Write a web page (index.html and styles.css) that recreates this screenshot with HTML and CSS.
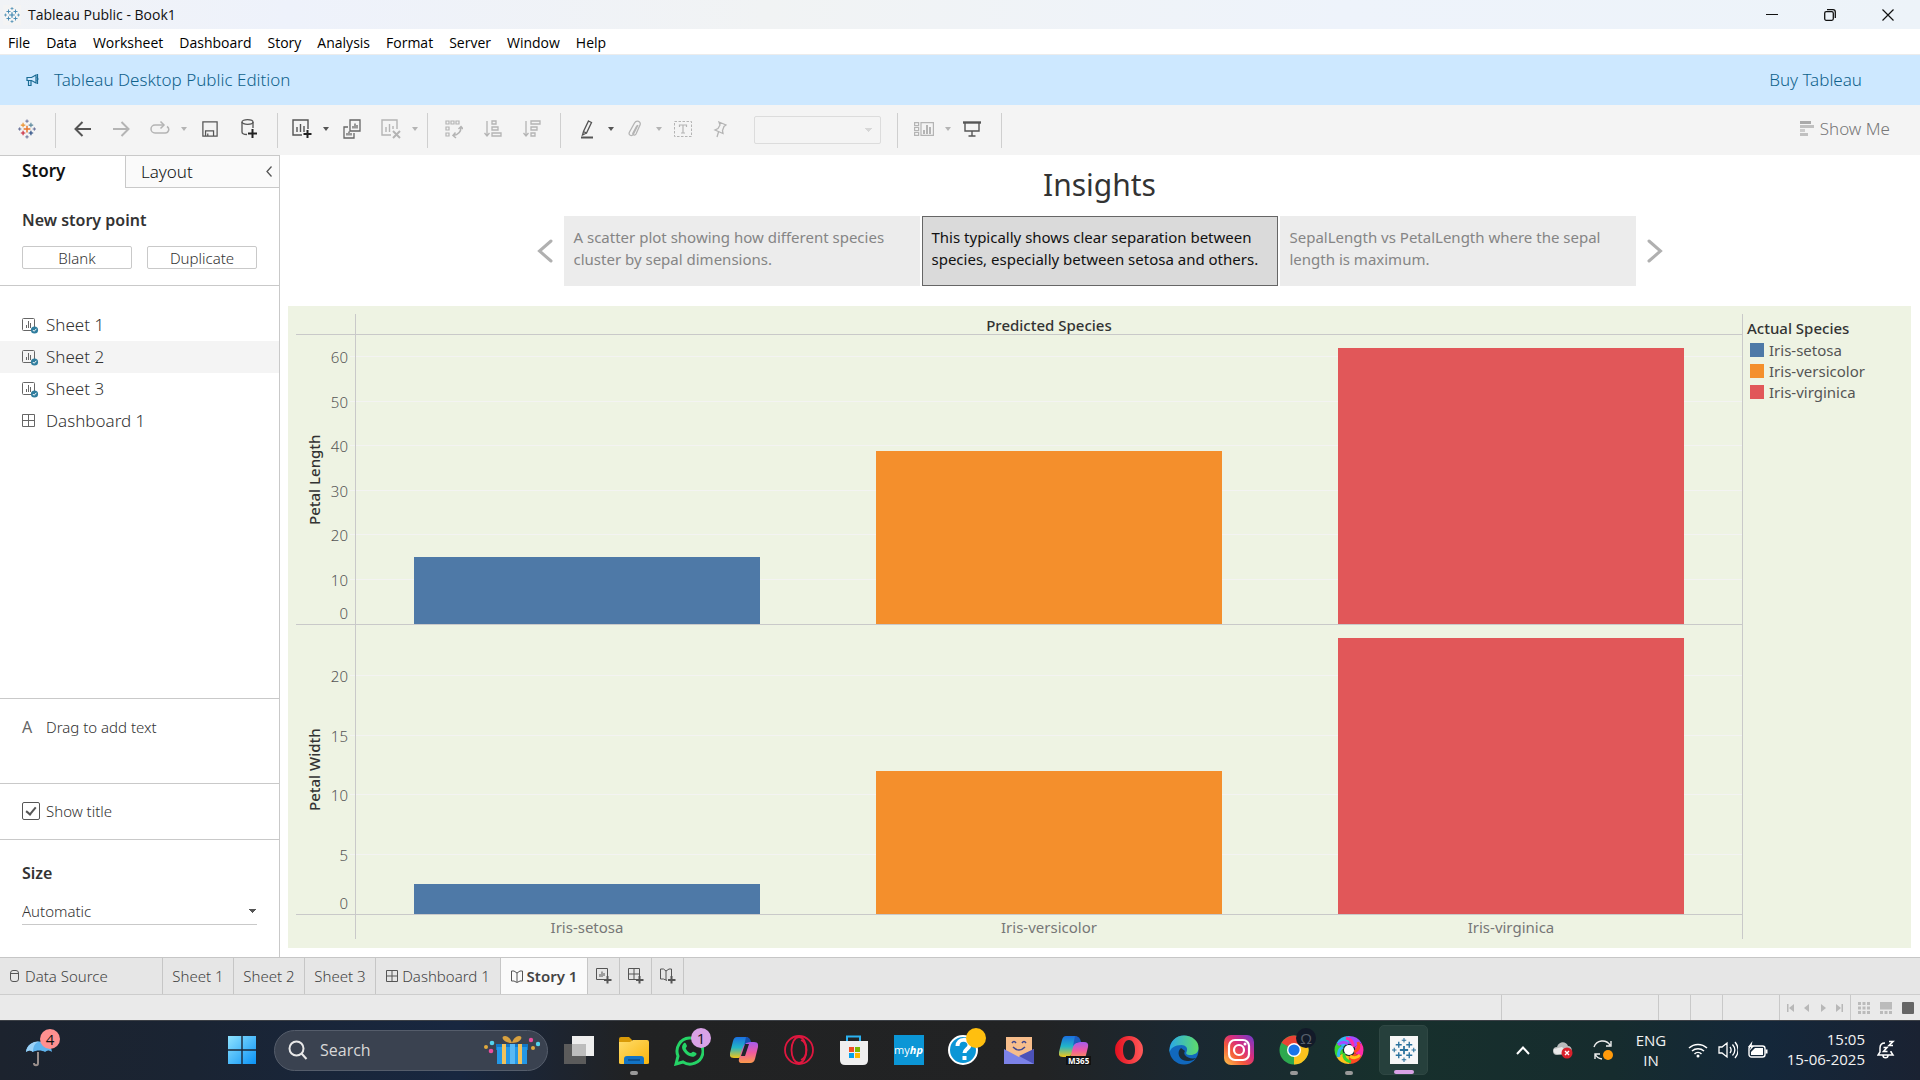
FILE: index.html
```html
<!DOCTYPE html>
<html lang="en">
<head>
<meta charset="utf-8">
<title>Tableau Public - Book1</title>
<link rel="stylesheet" href="styles.css">
</head>
<body>
<svg class="defs" aria-hidden="true">
  <defs>
    <symbol id="marks" viewBox="0 0 32 32">
      <g fill="none" stroke="currentColor">
        <path stroke-width="2.4" d="M16 10.500v11M10.500 16h11"/>
        <path stroke-width="1.800" d="M9 5v8M5 9h8M23 5v8M19 9h8M9 19v8M5 23h8M23 19v8M19 23h8"/>
        <path stroke-width="1.400" d="M16 0v6M13 3h6M16 26v6M13 29h6M3 13v6M0 16h6M29 13v6M26 16h6"/>
      </g>
    </symbol>
    <symbol id="sheet" viewBox="0 0 18 18">
      <rect x="0.500" y="2.500" width="12" height="12" rx="1" fill="none" stroke="#666"/>
      <path d="M4.500 9v3M6.500 5v7M8.500 7v5" stroke="#666"/>
      <circle cx="12.500" cy="14" r="3.600" fill="#2f7d9e"/>
      <path d="M10.800 14l1.300 1.300 2.300-2.500" fill="none" stroke="#fff"/>
    </symbol>
    <symbol id="dash" viewBox="0 0 18 18">
      <path d="M.500 2.500h12v12H.500zM6.500 2.500v12M.500 8.500h12" fill="none" stroke="#666"/>
    </symbol>
    <linearGradient id="gWin" x1="0" y1="0" x2="1" y2="1"><stop offset="0" stop-color="#8fe3ff"/><stop offset="1" stop-color="#0a92f5"/></linearGradient>
    <linearGradient id="gFold" x1="0" y1="0" x2="1" y2="1"><stop offset="0" stop-color="#ffdc6b"/><stop offset="1" stop-color="#f9b50b"/></linearGradient>
    <linearGradient id="gCopA" x1="0" y1="0" x2="0" y2="1"><stop offset="0" stop-color="#1b6fe0"/><stop offset=".500" stop-color="#22b5c8"/><stop offset="1" stop-color="#f2c718"/></linearGradient>
    <linearGradient id="gCopB" x1="0" y1="0" x2="0" y2="1"><stop offset="0" stop-color="#a45cf0"/><stop offset=".500" stop-color="#ef5aa0"/><stop offset="1" stop-color="#fb9a4b"/></linearGradient>
    <linearGradient id="gEdge" x1="0" y1="0" x2="1" y2="0"><stop offset="0" stop-color="#2aa9e8"/><stop offset="1" stop-color="#5fdc6a"/></linearGradient>
    <linearGradient id="gInsta" x1="0" y1="1" x2="1" y2="0"><stop offset="0" stop-color="#fdc94b"/><stop offset=".350" stop-color="#f4593a"/><stop offset=".600" stop-color="#d82d7e"/><stop offset="1" stop-color="#6b3bd1"/></linearGradient>
    <linearGradient id="gOpera" x1="0" y1="0" x2="1" y2="0"><stop offset="0" stop-color="#e3101f"/><stop offset="1" stop-color="#ff5a5a"/></linearGradient>
  </defs>
</svg>

<header class="titlebar">
  <svg class="app-icon" viewBox="0 0 18 20"><rect width="18" height="20" fill="#f4f4f4"/><use href="#marks" x="1" y="2" width="16" height="16" color="#3f86b0"/></svg>
  <span class="title">Tableau Public - Book1</span>
  <div class="win-controls">
    <button aria-label="Minimize"><svg width="12" height="12" viewBox="0 0 12 12"><path d="M0 5.500h12" stroke="#111"/></svg></button>
    <button aria-label="Restore"><svg width="12" height="12" viewBox="0 0 12 12" fill="none" stroke="#111" stroke-width="1.300"><rect x=".700" y="2.700" width="8.600" height="8.600" rx="1.500"/><path d="M3 .700h6a2.300 2.300 0 0 1 2.300 2.300v6"/></svg></button>
    <button aria-label="Close"><svg width="12" height="12" viewBox="0 0 12 12"><path d="M.500.500l11 11M11.500.500l-11 11" stroke="#111" stroke-width="1.200"/></svg></button>
  </div>
</header>

<nav class="menubar">
  <button>File</button><button>Data</button><button>Worksheet</button><button>Dashboard</button><button>Story</button><button>Analysis</button><button>Format</button><button>Server</button><button>Window</button><button>Help</button>
</nav>

<div class="banner">
  <svg width="14" height="14" viewBox="0 0 14 14" fill="none" stroke="#1a6b94" stroke-width="1.200"><path d="M1 4.500h4.500L10 2v8L5.500 7.500H1zM2.500 7.500v5h2.500v-5"/><path d="M10.500 4.500c2 0 2 3 0 3M11.500 1v10"/></svg>
  <a href="#">Tableau Desktop Public Edition</a>
  <a href="#" class="buy">Buy Tableau</a>
</div>

<div class="toolbar">
  <div class="group g-logo">
    <button class="tool" aria-label="Start page"><svg width="18" height="20" viewBox="0 0 32 34" fill="none">
      <path d="M16 11v12M10 17h12" stroke="#e8762c" stroke-width="2.600"/>
      <path d="M9 6v8M5 10h8" stroke="#eb912c" stroke-width="2"/><path d="M23 6v8M19 10h8" stroke="#59879b" stroke-width="2"/>
      <path d="M9 20v8M5 24h8" stroke="#c72035" stroke-width="2"/><path d="M23 20v8M19 24h8" stroke="#1f447e" stroke-width="2"/>
      <path d="M16 0v6M13 3h6M16 28v6M13 31h6M3 14v6M0 17h6M29 14v6M26 17h6" stroke="#5b6591" stroke-width="1.600"/></svg></button>
  </div>
  <div class="group g-nav">
    <button class="tool" aria-label="Back"><svg width="17" height="16" viewBox="0 0 17 16" fill="none" stroke="#555" stroke-width="2"><path d="M8.500 1L1.500 8l7 7M1.500 8H17"/></svg></button>
    <button class="tool" aria-label="Forward"><svg width="17" height="16" viewBox="0 0 17 16" fill="none" stroke="#b4b4b4" stroke-width="2"><path d="M8.500 1l7 7-7 7M15.500 8H0"/></svg></button>
    <div class="combo"><button class="tool" aria-label="Replay"><svg width="20" height="16" viewBox="0 0 20 16" fill="none" stroke="#b4b4b4" stroke-width="1.500"><path d="M13 4H5a4 4 0 0 0 0 8h10a3.500 3.500 0 0 0 2-6.500"/><path d="M10.500.500L14 4l-3.500 3.500"/></svg></button><button class="caret off" aria-label="Replay options"></button></div>
    <button class="tool" aria-label="Save"><svg width="16" height="16" viewBox="0 0 18 18" fill="none" stroke="#555" stroke-width="1.400"><path d="M1 1h16v16H1zM4 17v-6h9v6M6.500 17v-3"/></svg></button>
    <button class="tool" aria-label="New data source"><svg width="18" height="20" viewBox="0 0 18 20" fill="none" stroke="#555" stroke-width="1.300"><ellipse cx="7.500" cy="3" rx="5.500" ry="2.300"/><path d="M2 3v10c0 1.500 2 2.500 5 2.500M13 3v6"/><path d="M12.500 10v9M8 14.500h9" stroke="#222" stroke-width="2"/></svg></button>
  </div>
  <div class="group g-sheet">
    <div class="combo"><button class="tool" aria-label="New worksheet"><svg width="20" height="20" viewBox="0 0 20 20" fill="none" stroke="#555" stroke-width="1.400"><path d="M10 16H1V1h15v9M5 8v5M8.500 5v8M12 7v6"/><path d="M15.500 11v8M11.500 15h8" stroke="#222" stroke-width="2"/></svg></button><button class="caret" aria-label="New worksheet options"></button></div>
    <button class="tool" aria-label="Duplicate"><svg width="18" height="20" viewBox="0 0 18 20" fill="none" stroke="#666" stroke-width="1.300"><path d="M7 1h10v11H7zM10 7v2.500M12 4.500v5M14 6v3.500M5 8H1v11h10v-5M4 14v2.500M6 12.500v4M8 14v2.500"/></svg></button>
    <div class="combo"><button class="tool" aria-label="Clear sheet"><svg width="20" height="20" viewBox="0 0 20 20" fill="none" stroke="#b4b4b4" stroke-width="1.400"><path d="M10 16H1V1h15v9M5 8v5M8.500 5v8M12 7v3"/><path d="M12 12l7 7M19 12l-7 7" stroke-width="2"/></svg></button><button class="caret off" aria-label="Clear options"></button></div>
  </div>
  <div class="group g-sort">
    <button class="tool" aria-label="Swap"><svg width="18" height="20" viewBox="0 0 18 20" fill="none" stroke="#b4b4b4" stroke-width="1.200"><path d="M1 2h3v3H1zM6 2h3v3H6zM11 2h3v3h-3zM1 8h3v3H1zM1 14h3v3H1z"/><path d="M16 8c0 5-3 8-8 8.500M13.500 10L16 7.500 18 10M10.500 13.500L8 16.500l3 2.500" stroke-width="1.500"/></svg></button>
    <button class="tool" aria-label="Sort ascending"><svg width="18" height="18" viewBox="0 0 18 18" fill="none" stroke="#b4b4b4" stroke-width="1.300"><path d="M3 1v15M.500 13L3 16l2.500-3M8 1h4v3H8zM8 7h6v3H8zM8 13h9v3H8z"/></svg></button>
    <button class="tool" aria-label="Sort descending"><svg width="18" height="18" viewBox="0 0 18 18" fill="none" stroke="#b4b4b4" stroke-width="1.300"><path d="M3 1v15M.500 13L3 16l2.500-3M8 1h9v3H8zM8 7h6v3H8zM8 13h4v3H8z"/></svg></button>
  </div>
  <div class="group g-mark">
    <div class="combo"><button class="tool" aria-label="Highlight"><svg width="14" height="19" viewBox="0 0 14 19" fill="none" stroke="#555" stroke-width="1.300"><path d="M8.500 1l3 1.500-5 10.500-3-1.500zM3.500 11.500L2.500 15l4-2"/><path d="M1 17.500h12" stroke-width="2"/></svg></button><button class="caret" aria-label="Highlight options"></button></div>
    <div class="combo"><button class="tool" aria-label="Group"><svg width="14" height="18" viewBox="0 0 14 18" fill="none" stroke="#b4b4b4" stroke-width="1.300"><path d="M10 5L5.500 14c-2 3-5.500 1-4-2L6.500 3c2-3.500 7-1.500 5.500 2l-4 9c-1 2-4 1-3-1l4-7.500"/></svg></button><button class="caret off" aria-label="Group options"></button></div>
    <button class="tool" aria-label="Show mark labels"><svg width="18" height="16" viewBox="0 0 18 16" fill="none" stroke="#b4b4b4"><path d="M.500.500h17v15H.500z" stroke-dasharray="2.500 1.500"/><path d="M5.500 6V4h7v2M9 4v8M7 12h4" stroke-width="1.200"/></svg></button>
    <button class="tool" aria-label="Pin"><svg width="14" height="17" viewBox="0 0 14 17" fill="none" stroke="#b4b4b4" stroke-width="1.300"><path d="M6 1l7 3-2 1.500-1.500 4 .500 3L2 9l3-1.500L7 4zM5.500 11L4 16"/></svg></button>
    <select class="fit" aria-label="Fit" disabled><option></option></select>
  </div>
  <div class="group g-view">
    <div class="combo"><button class="tool" aria-label="Show cards"><svg width="20" height="14" viewBox="0 0 20 14" fill="none" stroke="#b4b4b4" stroke-width="1.200"><path d="M.600.600h4v3h-4zM.600 5.500h4v3h-4zM.600 10.400h4v3h-4zM7 .600h12.400v12.800H7z"/><path d="M10 12V8M13 12V3M16 12V5" stroke-width="2"/></svg></button><button class="caret off" aria-label="Card options"></button></div>
    <button class="tool" aria-label="Presentation mode"><svg width="18" height="16" viewBox="0 0 18 16" fill="none" stroke="#555"><path d="M0 1.500h18" stroke-width="2.400"/><path d="M2 2v8h14V2M9 10v5M5.500 15h7" stroke-width="1.400"/></svg></button>
  </div>
  <button class="showme"><svg width="14" height="16" viewBox="0 0 14 16"><path fill="#aaa" d="M0 0h11v3H0z"/><path fill="#c0c0c0" d="M0 4h14v3H0zM0 12h8v3H0z"/><path fill="#ccc" d="M0 8h5v3H0z"/></svg>Show Me</button>
</div>

<div class="workspace">
  <aside class="sidebar">
    <div class="side-tabs">
      <button class="tab-story">Story</button>
      <button class="tab-layout">Layout<svg width="6" height="11" viewBox="0 0 6 11" fill="none" stroke="#555" stroke-width="1.300"><path d="M5.500.500L1 5.500l4.500 5"/></svg></button>
    </div>
    <section class="new-point">
      <h2>New story point</h2>
      <div class="buttons"><button>Blank</button><button>Duplicate</button></div>
    </section>
    <ul class="sheets">
      <li><svg><use href="#sheet"/></svg>Sheet 1</li>
      <li class="hover"><svg><use href="#sheet"/></svg>Sheet 2</li>
      <li><svg><use href="#sheet"/></svg>Sheet 3</li>
      <li><svg><use href="#dash"/></svg>Dashboard 1</li>
    </ul>
    <section class="drag"><span class="letter">A</span>Drag to add text</section>
    <section class="show-title"><input type="checkbox" id="show-title" checked><label for="show-title">Show title</label></section>
    <section class="size">
      <h2><label for="size">Size</label></h2>
      <select id="size"><option>Automatic</option></select>
    </section>
  </aside>

  <main class="story">
    <h1>Insights</h1>
    <div class="points">
      <button class="arrow" aria-label="Previous"><svg width="16" height="24" viewBox="0 0 16 24" fill="none" stroke="#b0b0b0" stroke-width="3" stroke-linecap="round"><path d="M14 2L2.500 12 14 22"/></svg></button>
      <button class="point">A scatter plot showing how different species cluster by sepal dimensions.</button>
      <button class="point current">This typically shows clear separation between species, especially between setosa and others.</button>
      <button class="point">SepalLength vs PetalLength where the sepal length is maximum.</button>
      <button class="arrow" aria-label="Next"><svg width="16" height="24" viewBox="0 0 16 24" fill="none" stroke="#b0b0b0" stroke-width="3" stroke-linecap="round"><path d="M2 2l11.500 10L2 22"/></svg></button>
    </div>
    <div class="viz">
      <div class="chart">
        <div class="corner line-b"></div>
        <div class="col-title line-b">Predicted Species</div>
        <div class="axis line-b" style="--max:65">
          <span class="axis-title">Petal Length</span>
          <span class="tick" style="--v:60">60</span><span class="tick" style="--v:50">50</span><span class="tick" style="--v:40">40</span><span class="tick" style="--v:30">30</span><span class="tick" style="--v:20">20</span><span class="tick" style="--v:10">10</span><span class="tick zero">0</span>
        </div>
        <div class="plot line-b" style="--max:65">
          <i class="rule" style="--v:60"></i><i class="rule" style="--v:50"></i><i class="rule" style="--v:40"></i><i class="rule" style="--v:30"></i><i class="rule" style="--v:20"></i><i class="rule" style="--v:10"></i>
          <div class="bar setosa" style="--v:15.1"></div><div class="bar versicolor" style="--v:38.9"></div><div class="bar virginica" style="--v:62.1"></div>
        </div>
        <div class="axis line-b" style="--max:24.3">
          <span class="axis-title">Petal Width</span>
          <span class="tick" style="--v:20">20</span><span class="tick" style="--v:15">15</span><span class="tick" style="--v:10">10</span><span class="tick" style="--v:5">5</span><span class="tick zero">0</span>
        </div>
        <div class="plot line-b" style="--max:24.3">
          <i class="rule" style="--v:20"></i><i class="rule" style="--v:15"></i><i class="rule" style="--v:10"></i><i class="rule" style="--v:5"></i>
          <div class="bar setosa" style="--v:2.5"></div><div class="bar versicolor" style="--v:12"></div><div class="bar virginica" style="--v:23.2"></div>
        </div>
        <div class="corner"></div>
        <div class="cats"><span>Iris-setosa</span><span>Iris-versicolor</span><span>Iris-virginica</span></div>
      </div>
      <div class="legend">
        <h3>Actual Species</h3>
        <ul>
          <li><i class="setosa"></i>Iris-setosa</li>
          <li><i class="versicolor"></i>Iris-versicolor</li>
          <li><i class="virginica"></i>Iris-virginica</li>
        </ul>
      </div>
    </div>
  </main>
</div>

<nav class="tabs">
  <button class="t-source"><svg width="9" height="12" viewBox="0 0 9 12" fill="none" stroke="#555"><rect x=".500" y=".500" width="8" height="11" rx="2.500"/><path d="M.500 3.500h8"/></svg>Data Source</button>
  <button class="t-sheet">Sheet 1</button>
  <button class="t-sheet">Sheet 2</button>
  <button class="t-sheet">Sheet 3</button>
  <button class="t-dash"><svg width="12" height="12" viewBox="0 0 12 12" fill="none" stroke="#555"><path d="M.500.500h11v11H.500zM6 .500v11M.500 6h11"/></svg>Dashboard 1</button>
  <button class="t-story"><svg width="12" height="13" viewBox="0 0 12 13" fill="none" stroke="#555"><path d="M.500 1H3l3 2 3-2h2.500v10H9l-3 1.500L3 11H.500zM6 3v9"/></svg>Story 1</button>
  <button class="t-new" aria-label="New worksheet"><svg width="16" height="16" viewBox="0 0 16 16" fill="none" stroke="#555"><path d="M8 11.500H.500V.500h11V8M4 6v3M6 3.500V9M8 5v3"/><path d="M11.500 8v7.500M8 12h7.500" stroke-width="2"/></svg></button>
  <button class="t-new" aria-label="New dashboard"><svg width="16" height="16" viewBox="0 0 16 16" fill="none" stroke="#555"><path d="M8 11.500H.500V.500h11V8M6 .500v11M.500 6h11"/><path d="M11.500 8v7.500M8 12h7.500" stroke-width="2"/></svg></button>
  <button class="t-new" aria-label="New story"><svg width="16" height="16" viewBox="0 0 16 16" fill="none" stroke="#555"><path d="M7 12.500L3.500 11h-3V1h3l2.500 2L9 1h2.500v7M6 3v9"/><path d="M11.500 8v7.500M8 12h7.500" stroke-width="2"/></svg></button>
</nav>

<div class="status">
  <span class="cell c-wide"></span><span class="cell c-small"></span><span class="cell c-small"></span><span class="cell c-mid"></span>
  <span class="cell c-nav">
    <svg width="8" height="8" viewBox="0 0 8 8" fill="#b8b8b8"><path d="M0 0h1.500v8H0zM7 0v8L2 4z"/></svg>
    <svg width="8" height="8" viewBox="0 0 8 8" fill="#b8b8b8"><path d="M6 0v8L1 4z"/></svg>
    <svg width="8" height="8" viewBox="0 0 8 8" fill="#b8b8b8"><path d="M2 0v8l5-4z"/></svg>
    <svg width="8" height="8" viewBox="0 0 8 8" fill="#b8b8b8"><path d="M6.500 0H8v8H6.500zM1 0v8l5-4z"/></svg>
  </span>
  <span class="cell c-mode">
    <svg width="12" height="12" viewBox="0 0 12 12" fill="#bbb"><path d="M0 0h3v3H0zM4.500 0h3v3h-3zM9 0h3v3H9zM0 4.500h3v3H0zM4.500 4.500h3v3h-3zM9 4.500h3v3H9zM0 9h3v3H0zM4.500 9h3v3h-3zM9 9h3v3H9z"/></svg>
    <svg width="12" height="12" viewBox="0 0 12 12" fill="#bbb"><path d="M0 0h12v7.500H0zM0 9h3v3H0zM4.500 9h3v3h-3zM9 9h3v3H9z"/></svg>
    <svg width="12" height="12" viewBox="0 0 12 12"><rect width="12" height="12" rx="1" fill="#666"/></svg>
  </span>
</div>

<footer class="taskbar">
  <button class="widget" aria-label="Widgets"><svg width="26" height="30" viewBox="0 0 26 30"><path d="M12 14v11c0 3-4 3-4 0" fill="none" stroke="#9a8f8c" stroke-width="2"/><path d="M0 14C1 0 25 0 26 14c-3-2-5-2-7 0-3-2-9-2-12 0-2-2-4-2-7 0z" fill="#5fb4ee"/><path d="M7 14C7 8 9 5 13 3.500 8 3 1 6 0 14c3-2 5-2 7 0z" fill="#9bd2f7"/></svg><span class="badge pink">4</span></button>
  <div class="dock">
    <button class="start" aria-label="Start"><svg width="30" height="30" viewBox="0 0 30 30" fill="url(#gWin)"><path d="M1 1h13.300v13.300H1zM15.700 1H29v13.300H15.700zM1 15.700h13.300V29H1zM15.700 15.700H29V29H15.700z"/></svg></button>
    <div class="search">
      <svg width="20" height="20" viewBox="0 0 20 20" fill="none" stroke="#e8e8e8" stroke-width="2"><circle cx="8.500" cy="8.500" r="7"/><path d="M13.500 13.500L18.500 19"/></svg>
      <input type="text" placeholder="Search" aria-label="Search">
      <svg width="56" height="30" viewBox="0 0 56 30"><path d="M12 9h32v6H12z" fill="#1178c8"/><path d="M13 12h30v17H13z" fill="#2497e6"/><path d="M18 9h4v20h-4zM34 9h4v20h-4z" fill="#f1c25b"/><path d="M26 9h5v20h-5z" fill="#58b9f5"/><path d="M28 8c-9 0-12-7-7-7 3 0 6 3 7 7 1-4 4-7 7-7 5 0 2 7-7 7z" fill="#d8a03f"/><circle cx="2" cy="12" r="2" fill="#e0a93e"/><circle cx="8" cy="8" r="2.300" fill="#53d3ee"/><circle cx="7" cy="16" r="2.300" fill="#ea4d9c"/><circle cx="47" cy="5" r="2.200" fill="#ea4d9c"/><circle cx="49" cy="13" r="2" fill="#e0a93e"/><circle cx="54" cy="9" r="2.200" fill="#53d3ee"/></svg>
    </div>
    <button class="app" aria-label="Task view"><svg width="30" height="30" viewBox="0 0 30 30"><path d="M0 9h22v20H0z" fill="#5b5b5b"/><path d="M8 1h22v20H8z" fill="#eee"/><path d="M8 9h14v12H8z" fill="#bdbdbd"/></svg></button>
    <button class="app" aria-label="File Explorer"><svg width="30" height="30" viewBox="0 0 30 30"><path d="M0 4q0-2 2-2h8l3 3v5H0z" fill="#d99a08"/><path d="M0 7h11l3-2h14q2 0 2 2v21q0 1-2 1H2q-2 0-2-1z" fill="url(#gFold)"/><path d="M5 29v-5q0-3 3-3h14q3 0 3 3v5z" fill="#1273c4"/><path d="M9 25h12" stroke="#0b4a86" stroke-width="1.500"/></svg><i class="run"></i></button>
    <button class="app" aria-label="WhatsApp"><svg width="30" height="32" viewBox="0 0 30 32"><path d="M2 30l2-8a13 13 0 1 1 5 6z" fill="none" stroke="#25d366" stroke-width="3"/><path d="M10 9c1-1 2 0 3 3 0 1-2 2-1 3 1 2 3 4 5 4 1 0 1-2 3-1 3 1 3 2 2 3-2 3-6 2-10-1-3-3-6-7-2-11z" fill="#25d366"/></svg><span class="badge purple">1</span></button>
    <button class="app" aria-label="Copilot"><svg width="28" height="28" viewBox="0 0 28 28"><path d="M7 1h9q3 0 2 4l-4 12q-2 5-6 5H4q-5 0-4-5L3 5q1-4 4-4z" fill="url(#gCopA)"/><path d="M20 6h4q5 0 4 5l-3 12q-1 4-5 4h-8q-4 0-3-4l4-12q2-5 7-5z" fill="url(#gCopB)"/><path d="M15 8l-4 12h4l4-12z" fill="#20242c"/><path d="M16 1q4 0 5 5-6 0-7 4z" fill="#1550b0"/></svg></button>
    <button class="app" aria-label="Opera GX"><svg width="30" height="30" viewBox="0 0 30 30" fill="none" stroke="#e0173f" stroke-width="1.800"><circle cx="15" cy="15" r="14"/><ellipse cx="15" cy="15" rx="7.500" ry="13"/><path d="M17 5c7 3 7 17 0 20"/></svg></button>
    <button class="app" aria-label="Microsoft Store"><svg width="30" height="30" viewBox="0 0 30 30"><path d="M8 7V1.500h13V7" fill="none" stroke="#2bb1f0" stroke-width="2"/><path d="M1 6h28v19q0 5-5 5H6q-5 0-5-5z" fill="#efefef"/><path d="M10 12h5v5h-5z" fill="#f04e23"/><path d="M16 12h5v5h-5z" fill="#7fb900"/><path d="M10 18h5v5h-5z" fill="#01a2ed"/><path d="M16 18h5v5h-5z" fill="#fdb802"/></svg></button>
    <button class="app" aria-label="myHP"><span class="myhp">my<b>hp</b></span></button>
    <button class="app" aria-label="Get Help"><svg width="36" height="36" viewBox="0 0 36 36"><circle cx="17" cy="18" r="14" fill="#0b96d6" stroke="#fff" stroke-width="2"/><path d="M11.500 14c0-8 12-8 12-1 0 4-5 4-5 8M18.500 24v4" fill="none" stroke="#fff" stroke-width="4"/></svg><span class="badge yellow"></span></button>
    <button class="app" aria-label="Mail"><svg width="30" height="30" viewBox="0 0 30 30"><path d="M2 2h26v20H2z" fill="#f7bd8b"/><path d="M0 14l15 8 15-8v15H0z" fill="#7c82e8"/><path d="M30 14L15 21l15 8z" fill="#4c52b8"/><path d="M8 8q2-3 4 0M18 8q2-3 4 0M9 12q6 6 12 0" fill="none" stroke="#3e4590" stroke-width="1.500"/></svg></button>
    <button class="app" aria-label="Microsoft 365 Copilot"><svg width="30" height="30" viewBox="0 0 30 30"><path d="M7 1h9q3 0 2 4l-4 12q-2 5-6 5H4q-5 0-4-5L3 5q1-4 4-4z" fill="url(#gCopA)"/><path d="M21 7h4q5 0 4 5l-2 8q-1 4-5 4h-7q-4 0-3-4l2-8q2-5 7-5z" fill="url(#gCopB)"/><path d="M16 1q5 0 6 6-6 0-8 4z" fill="#1d5cc0"/></svg><span class="m365">M365</span></button>
    <button class="app" aria-label="Opera"><svg width="30" height="30" viewBox="0 0 30 30"><path fill-rule="evenodd" fill="url(#gOpera)" d="M15 1a14 14 0 1 0 0 28 14 14 0 0 0 0-28zM15 5c4 0 6 4.500 6 10s-2 10-6 10-6-4.500-6-10 2-10 6-10z"/></svg></button>
    <button class="app" aria-label="Edge"><svg width="30" height="30" viewBox="0 0 30 30"><circle cx="15" cy="15" r="14.500" fill="#1168bd"/><path d="M.500 15C1 6 7 .500 15 .500S30 6 29.500 13c0 5-4 7-8 7-4 0-5-1.500-4-3 2-4-1-7-5-7C6 10 1 13 .500 18z" fill="url(#gEdge)"/><path d="M12 13c-5 4-2 13 6 13 5 0 7-1 9-3-4 1-9 0-11-3-1.500-2 0-4 0-4z" fill="#1b2c38"/></svg></button>
    <button class="app" aria-label="Instagram"><svg width="30" height="30" viewBox="0 0 30 30"><rect width="30" height="30" rx="7" fill="url(#gInsta)"/><g fill="none" stroke="#fff" stroke-width="2.200"><rect x="5" y="5" width="20" height="20" rx="6"/><circle cx="15" cy="15" r="5"/></g><circle cx="21" cy="9" r="1.500" fill="#fff"/></svg></button>
    <button class="app" aria-label="Chrome"><svg width="30" height="30" viewBox="1 5 30 30"><circle cx="16" cy="20" r="14.500" fill="#2da94f"/><path d="M16 20L3.500 12.700A14.500 14.500 0 0 1 28.600 12.700z" fill="#ea4335"/><path d="M16 20L28.600 12.700A14.500 14.500 0 0 1 16 34.500z" fill="#fcc31e"/><circle cx="16" cy="20" r="7" fill="#fff"/><circle cx="16" cy="20" r="5.600" fill="#1a73e8"/></svg><span class="badge profile">Ω</span><i class="run"></i></button>
    <button class="app" aria-label="Color browser"><svg width="30" height="30" viewBox="-15 -15 30 30" stroke-width="8" fill="none"><path d="M0-10A10 10 0 0 1 9-5" stroke="#a34bff"/><path d="M9-5A10 10 0 0 1 9 5" stroke="#ff2ca8"/><path d="M9 5A10 10 0 0 1 0 10" stroke="#ff4a22"/><path d="M0 10A10 10 0 0 1-9 5" stroke="#ffc21a"/><path d="M-9 5A10 10 0 0 1-9-5" stroke="#38d430"/><path d="M-9-5A10 10 0 0 1 0-10" stroke="#35b4f3"/><g stroke-width="3"><path d="M-3-12q8 2 7 9" stroke="#ff2ca8"/><path d="M9-8q3 7-4 10" stroke="#ff4a22"/><path d="M11 5q-5 5-10 1" stroke="#ffc21a"/><path d="M2 12q-8-2-7-9" stroke="#38d430"/><path d="M-10 7q-2-7 4-10" stroke="#35b4f3"/><path d="M-11-5q5-5 10-1" stroke="#a34bff"/></g><circle r="5" fill="#fff" stroke="none"/></svg><i class="run"></i></button>
    <button class="app active" aria-label="Tableau Public"><svg width="28" height="28" viewBox="0 0 28 28"><path d="M0 0h28v28H0z" fill="#f7f7f7"/><use href="#marks" x="2" y="2" width="24" height="24" color="#2a729e"/></svg><i class="run on"></i></button>
  </div>
  <div class="tray">
    <button class="ti" aria-label="Hidden icons"><svg width="14" height="9" viewBox="0 0 14 9" fill="none" stroke="#fff" stroke-width="2"><path d="M1 8l6-6.500L13 8"/></svg></button>
    <button class="ti" aria-label="OneDrive"><svg width="20" height="17" viewBox="0 0 20 17"><path d="M4 13a4 4 0 0 1 0-8C6-1 13-1 15 4c4 0 5 5 2 8z" fill="#b9bcbc"/><path d="M1 7l8-2 7 7H4c-3 0-4-3-3-5z" fill="#e9e9e9"/><circle cx="14" cy="11" r="5.500" fill="#d9222c"/><path d="M12 9l4 4M16 9l-4 4" stroke="#fff" stroke-width="1.400"/></svg></button>
    <button class="ti" aria-label="Updates"><svg width="20" height="20" viewBox="0 0 20 20" fill="none" stroke="#eee" stroke-width="1.400"><path d="M1 7a9 9 0 0 1 16-2M18 1v5h-5M2 19v-5h5M2 14a9 9 0 0 0 7 5"/><circle cx="15" cy="15" r="5" fill="#ff9a0b" stroke="none"/></svg></button>
    <span class="lang">ENG<br>IN</span>
    <span class="net">
      <svg width="20" height="16" viewBox="0 0 20 16" fill="none" stroke="#fff" stroke-width="1.500"><path d="M1 6a13 13 0 0 1 18 0M4 9a9 9 0 0 1 12 0M6.500 12a5 5 0 0 1 7 0"/><circle cx="10" cy="14" r="1.500" fill="#fff" stroke="none"/></svg>
      <svg width="20" height="18" viewBox="0 0 20 18" fill="none" stroke="#fff" stroke-width="1.300"><path d="M1 6h3l5-4v14l-5-4H1zM12 6c1.500 2 1.500 4 0 6M14.500 3.500c3 3.500 3 7.500 0 11M17 1c4 5 4 11 0 16"/></svg>
      <svg width="20" height="18" viewBox="0 0 20 18" fill="none" stroke="#fff" stroke-width="1.400"><rect x="1" y="5" width="16" height="11" rx="2.500"/><path d="M7 7h8v7H3v-3z" fill="#fff" stroke="none"/><path d="M18.500 8.500v4" stroke-width="2"/><path d="M4.500 0L0 6h3L1.500 10 6 5H3.500z" fill="#fff" stroke="none"/></svg>
    </span>
    <span class="clock">15:05<br>15-06-2025</span>
    <button class="bell" aria-label="Notifications"><svg width="18" height="20" viewBox="0 0 18 20" fill="none" stroke="#fff" stroke-width="1.500"><path d="M8 3C5 3 3 5 3 8v4l-2 3h15l-2-3v-1M6 15.500c0 3 5 3 5 0"/><path d="M6.500 7.500h3.500l-3.500 4h4M12 1.500h4l-4 4h4" stroke-width="1.600"/></svg></button>
  </div>
</footer>
</body>
</html>
```
FILE: styles.css
```css
* { box-sizing: border-box; }
body {
  margin: 0;
  min-height: 100vh;
  display: flex;
  flex-direction: column;
  background: #fff;
  color: #333;
  font: 16px/24px "Noto Sans", "Open Sans", sans-serif;
}
button, select, input { font: inherit; color: inherit; }
button { border: 0; padding: 0; margin: 0; background: none; }
h1, h2, h3, ul { margin: 0; padding: 0; font-weight: 400; }
ul { list-style: none; }
a { color: inherit; text-decoration: none; }
svg { display: block; flex: none; }
.defs { position: absolute; width: 0; height: 0; }
.titlebar, .menubar, .taskbar { font-family: "Open Sans", "Noto Sans", sans-serif; }

/* window chrome */
.titlebar {
  height: 29px;
  display: flex;
  align-items: center;
  padding: 0 3px 0 3px;
  background: linear-gradient(90deg, #f1f3f6, #eef2fb 15%, #f1f3f4 40%, #eef3fb 70%, #edf3f9);
  color: #111;
  font-size: 14px;
}
.app-icon { width: 18px; height: 20px; margin-right: 7px; }
.win-controls { margin-left: auto; display: flex; }
.win-controls button { width: 58px; height: 28px; display: grid; place-items: center; }
.menubar {
  height: 26px;
  display: flex;
  align-items: center;
  gap: 16px;
  padding: 2px 8px 0;
  border-bottom: 1px solid #ececec;
  color: #000;
  font-size: 14px;
}
.banner {
  height: 50px;
  display: flex;
  align-items: center;
  padding: 0 58px 0 26px;
  background: #cde8ff;
  color: #0f628c;
  font-size: 17px;
  font-weight: 300;
}
.banner svg { margin-right: 14px; }
.buy { margin-left: auto; }

/* toolbar */
.toolbar {
  height: 50px;
  display: flex;
  align-items: center;
  background: #f4f4f4;
}
.group { height: 35px; display: flex; align-items: center; gap: 7px; border-right: 1px solid #cfcfcf; }
.tool { width: 32px; height: 32px; padding-bottom: 2px; display: grid; place-items: center; }
.combo { display: flex; margin-right: -5px; }
.caret { width: 16px; height: 32px; padding-bottom: 2px; display: grid; place-items: center; }
.caret::before { content: ""; border: 3px solid transparent; border-top: 4px solid #555; border-bottom: 0; }
.caret.off::before { border-top-color: #b4b4b4; }
.g-logo { padding: 0 12px 0 11px; }
.g-nav { padding: 0 12px 0 10px; }
.g-sheet { padding: 0 9px 0 8px; }
.g-sort { padding: 0 12px 0 10px; }
.g-mark { padding: 0 16px 0 10px; gap: 5px; }
.g-view { padding: 0 13px 0 10px; gap: 5px; }
.fit, .size select { appearance: none; background: no-repeat; }
.fit {
  width: 127px;
  height: 28px;
  margin-left: 13px;
  border: 1px solid #d2d2d2;
  border-radius: 2px;
  background-image: linear-gradient(to bottom right, #ccc 50%, transparent 0), linear-gradient(to bottom left, #ccc 50%, transparent 0);
  background-position: right 7px center, right 11px center;
  background-size: 4px 4px;
}
.showme { margin-left: auto; margin-right: 30px; padding-bottom: 2px; display: flex; align-items: center; gap: 6px; color: #777; font-size: 17px; font-weight: 300; }

.workspace { flex: 1; display: flex; }

/* side pane */
.sidebar { width: 280px; flex: none; display: flex; flex-direction: column; border-right: 1px solid #c9c9c9; }
.side-tabs { height: 33px; display: flex; border-top: 1px solid #c9c9c9; color: #111; font-size: 17px; }
.side-tabs button { text-align: left; }
.tab-story { width: 125px; padding: 0 0 2px 22px; font-weight: 600; }
.tab-layout { flex: 1; display: flex; align-items: center; justify-content: space-between; padding: 0 7px 0 15px; border-left: 1px solid #c9c9c9; border-bottom: 1px solid #c9c9c9; background: #fafafa; font-weight: 300; }
.sidebar h2 { font-size: 16px; font-weight: 600; }
.new-point { padding: 20px 22px 16px; border-bottom: 1px solid #c9c9c9; }
.buttons { display: flex; gap: 15px; margin-top: 14px; }
.buttons button { flex: 1; height: 23px; border: 1px solid #c9c9c9; border-radius: 2px; font-size: 15px; line-height: 20px; font-weight: 300; }
.sheets { flex: 1; padding-top: 23px; font-size: 17px; font-weight: 300; }
.sheets li { height: 32px; display: flex; align-items: center; gap: 6px; padding-left: 22px; }
.sheets svg { width: 18px; height: 18px; }
.sheets .hover { background: #f4f4f4; }
.drag, .show-title, .size { border-top: 1px solid #c9c9c9; padding: 0 22px; font-size: 15px; font-weight: 300; }
.drag { height: 85px; padding-top: 16px; display: flex; }
.letter { width: 24px; font-size: 16px; font-weight: 400; color: #666; }
.show-title { height: 56px; display: flex; align-items: center; gap: 6px; padding-bottom: 1px; }
.show-title input { appearance: none; width: 18px; height: 18px; margin: 0; display: grid; place-items: center; border: 1px solid #555; border-radius: 2px; }
.show-title input:checked::before { content: ""; width: 4px; height: 8px; margin-bottom: 3px; border: solid #555; border-width: 0 2px 2px 0; transform: rotate(40deg); }
.size { padding-top: 21px; padding-bottom: 32px; }
.size select {
  width: 100%;
  height: 27px;
  margin-top: 13px;
  display: block;
  border: 0;
  border-bottom: 1px solid #c9c9c9;
  background-image: linear-gradient(to bottom right, #555 50%, transparent 0), linear-gradient(to bottom left, #555 50%, transparent 0);
  background-position: right 0 center, right 4px center;
  background-size: 4px 4px;
}

/* story */
.story { flex: 1; display: flex; flex-direction: column; padding: 0 9px 9px 8px; min-width: 0; }
h1 { height: 61px; line-height: 60px; text-align: center; font-size: 30px; color: #333; }
.points { display: flex; justify-content: center; align-items: center; gap: 2px; }
.arrow { width: 34px; height: 70px; display: grid; place-items: center; }
.point { width: 356px; height: 70px; padding: 9px; display: flex; text-align: left; border: 1px solid #ececec; background: #ececec; color: #858585; font-size: 15px; line-height: 22px; }
.point.current { border-color: #666; background: #dadada; color: #111; }
.viz { flex: 1; display: flex; margin-top: 20px; padding: 8px 0 9px 8px; background: #eef3e3; }
.chart { flex: 1; display: grid; grid-template-columns: 60px 1fr; grid-template-rows: 21px 1fr 1fr 24px; color: #777; font-size: 15px; }
.line-b { border-bottom: 1px solid #c9c9c9; }
.corner, .axis { border-right: 1px solid #c9c9c9; }
.col-title { text-align: center; font-size: 15px; line-height: 22px; font-weight: 500; color: #333; }
.axis, .plot { position: relative; }
.axis-title { position: absolute; left: 6px; top: 0; bottom: 0; width: 24px; text-align: center; writing-mode: vertical-rl; transform: rotate(180deg); font-size: 15px; font-weight: 500; color: #333; }
.tick { position: absolute; right: 7px; bottom: calc(var(--v) / var(--max) * 100%); margin-bottom: -12px; font-weight: 300; color: #555; }
.tick::after { content: ""; position: absolute; left: 100%; top: 11px; margin-left: 2px; width: 5px; height: 1px; background: #f3f4f2; }
.tick.zero { bottom: 0; margin-bottom: -1px; }
.tick.zero::after { content: none; }
.plot { display: grid; grid-template-columns: repeat(3, 1fr); align-items: end; justify-items: center; }
.rule { position: absolute; left: 0; right: 0; height: 1px; bottom: calc(var(--v) / var(--max) * 100%); background: #f3f3f2; }
.bar { position: relative; width: 75%; height: calc(var(--v) / var(--max) * 100%); }
.setosa { background: #4e79a7; }
.versicolor { background: #f48f2c; }
.virginica { background: #e15759; }
.cats { display: grid; grid-template-columns: repeat(3, 1fr); text-align: center; }
.legend { width: 169px; border-left: 1px solid #c9c9c9; padding: 4px; font-size: 15px; color: #555; }
.legend h3 { font-size: 15px; line-height: 21px; font-weight: 500; color: #333; }
.legend li { display: flex; align-items: center; gap: 5px; height: 21px; padding-left: 3px; white-space: nowrap; }
.legend i { width: 14px; height: 14px; }

/* sheet tabs and status */
.tabs { height: 38px; display: flex; background: #e6e6e6; border-top: 1px solid #c6c6c6; border-bottom: 1px solid #cdcdcd; color: #444; font-size: 15px; font-weight: 300; }
.tabs button { display: flex; align-items: center; justify-content: center; gap: 4px; border-right: 1px solid #c6c6c6; white-space: nowrap; }
.tabs .t-source { width: 163px; justify-content: flex-start; gap: 6px; padding-left: 10px; }
.t-sheet { width: 71px; }
.t-dash { width: 125px; }
.tabs .t-story { width: 87px; background: #fafafa; font-weight: 600; }
.t-new { width: 32px; }
.status { height: 25px; display: flex; justify-content: flex-end; background: #eaeaea; }
.cell { border-left: 1px solid #c9c9c9; display: flex; align-items: center; justify-content: center; }
.c-wide { width: 157px; }
.c-small { width: 32px; }
.c-mid { width: 57px; }
.c-nav { width: 71px; gap: 8px; }
.c-mode { width: 70px; gap: 10px; }

/* taskbar */
.taskbar {
  height: 60px;
  display: flex;
  align-items: center;
  padding-bottom: 1px;
  background: linear-gradient(90deg, #1c232e, #1a2433 10%, #182740 24%, #212223 33%, #222324 54%, #1a2832 62%, #17302c 72%, #162c2e 84%, #14273a 92%, #1a2232);
  border-top: 1px solid #3c4046;
  color: #f2f2f2;
  font-size: 15px;
}
.widget { position: relative; width: 28px; margin-left: 26px; padding-top: 6px; }
.badge { position: absolute; width: 20px; height: 20px; border-radius: 50%; color: #111; font-size: 15px; line-height: 20px; text-align: center; }
.pink { background: #ff9090; left: 14px; top: -3px; }
.purple { background: #d9a2e6; left: 27px; top: 3px; }
.yellow { background: #ffbf0f; left: 27px; top: 3px; }
.profile { background: #121a29; color: #59606c; left: 27px; top: 3px; }
.dock { display: flex; align-items: center; margin-left: 173px; }
.start { margin-right: 17px; }
.search { width: 274px; height: 41px; display: flex; align-items: center; padding: 0 7px 0 13px; gap: 12px; border: 1px solid #555d6b; border-radius: 21px; background: #3a4250; }
.search input { flex: 1; width: 0; border: 0; padding: 0; background: none; font-size: 16px; }
.search input::placeholder { color: #d8d8d8; }
.app { position: relative; width: 49px; height: 50px; display: grid; place-items: center; margin-left: 6px; border-radius: 5px; }
.app.active { background: #26403c; border: 1px solid #2f4743; }
.run { position: absolute; left: 50%; bottom: 0; width: 8px; height: 4px; margin-left: -4px; border-radius: 2px; background: #999; }
.run.on { width: 20px; margin-left: -10px; background: #d9a2e6; }
.myhp { width: 30px; height: 30px; background: #0b96d6; color: #fff; font-size: 11px; line-height: 29px; text-align: center; }
.myhp b { font-style: italic; }
.m365 { position: absolute; left: 17px; bottom: 10px; padding: 0 2px; background: #111; color: #fff; font-size: 8px; line-height: 9px; font-weight: 700; }
.tray { margin-left: auto; display: flex; align-items: center; line-height: 20px; }
.ti { width: 40px; display: grid; place-items: center; }
.lang { width: 56px; text-align: center; }
.net { display: flex; align-items: center; gap: 10px; margin-left: 9px; }
.clock { width: 97px; padding-bottom: 2px; text-align: right; white-space: nowrap; }
.bell { margin: 0 25px 0 12px; }
```
